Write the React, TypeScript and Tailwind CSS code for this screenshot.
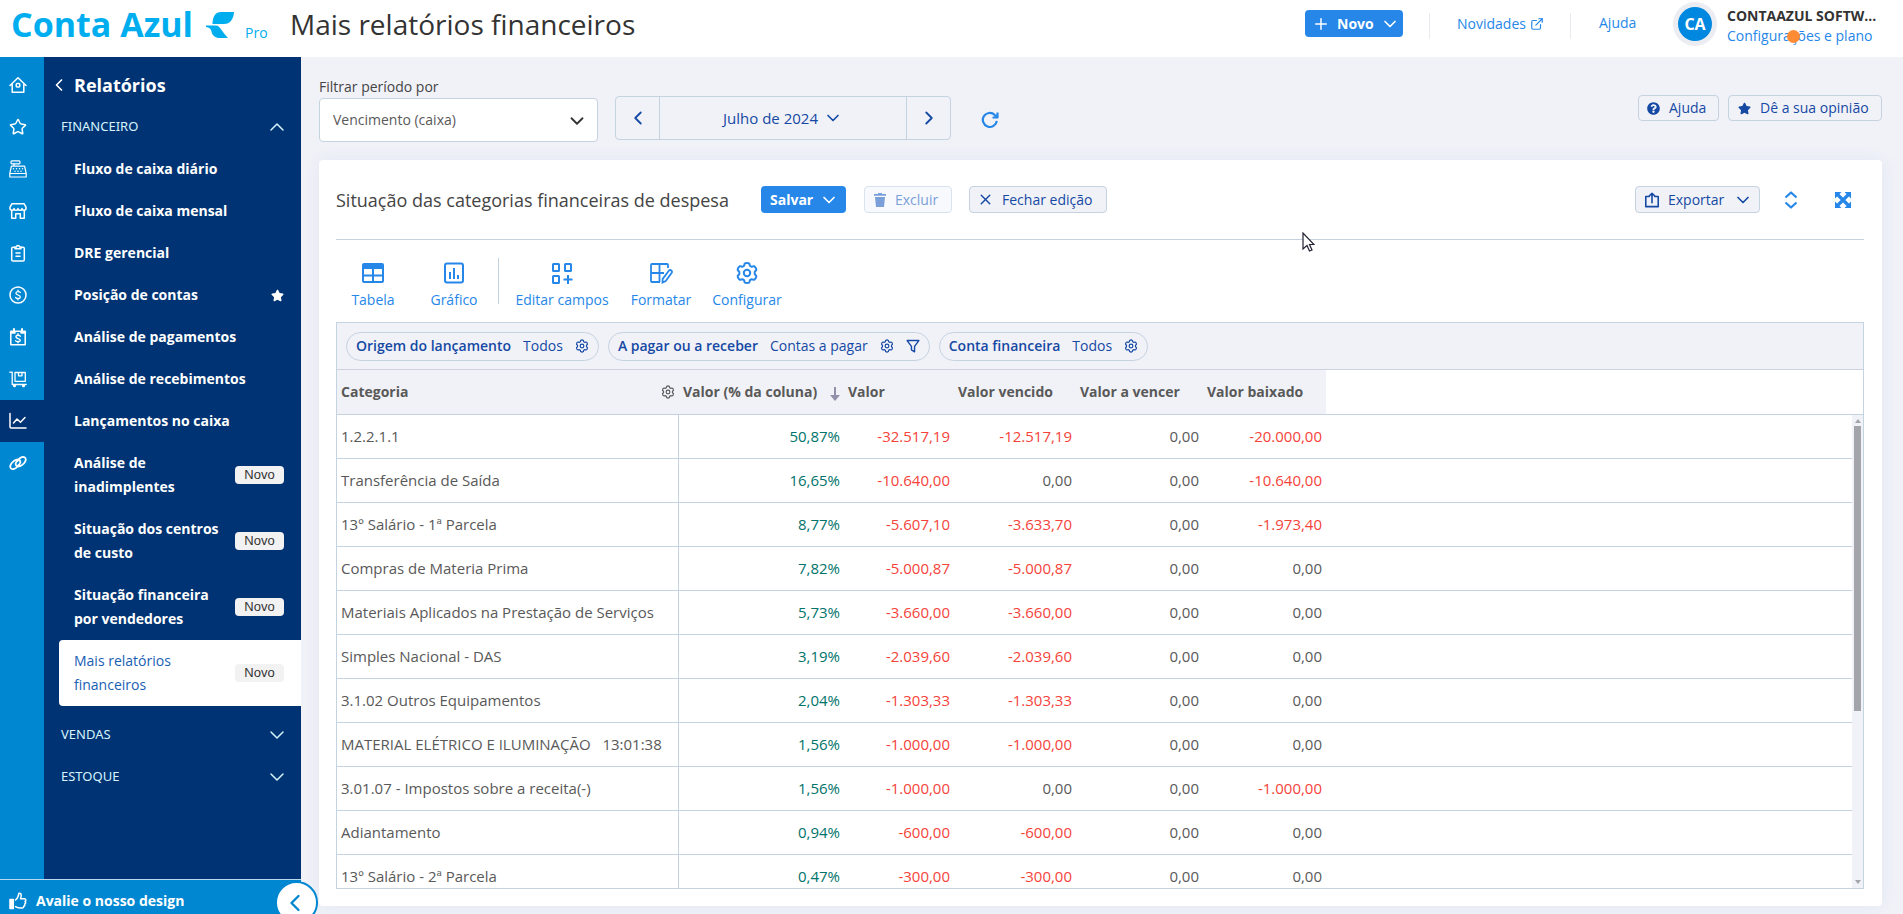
import type { ReactNode } from "react";
import {
  LuChevronDown,
  LuChevronLeft,
  LuChevronRight,
  LuChevronUp,
  LuExternalLink,
  LuPlus,
  LuStar,
  LuX,
} from "react-icons/lu";
import { FaQuestionCircle, FaStar } from "react-icons/fa";

interface IconProps {
  className?: string;
  children: ReactNode;
}

function Icon({ className = "size-[18px]", children }: IconProps) {
  return (
    <svg
      viewBox="0 0 18 18"
      fill="none"
      stroke="currentColor"
      strokeWidth="1.5"
      strokeLinecap="round"
      strokeLinejoin="round"
      className={`shrink-0 ${className}`}
    >
      {children}
    </svg>
  );
}

function GearIcon({ className }: { className: string }) {
  return (
    <svg
      viewBox="0 0 24 24"
      fill="none"
      stroke="currentColor"
      strokeWidth="2"
      strokeLinejoin="round"
      className={`shrink-0 ${className}`}
    >
      <path d="M9.7 2.5c.9-.7 3.7-.7 4.6 0l.6 2.3c.7.5 1.1.7 1.8.9l2.3-.6c1.1.5 2.4 2.7 2.3 3.9l-1.6 1.8v2.4l1.6 1.8c.1 1.2-1.2 3.4-2.3 3.9l-2.3-.6c-.7.2-1.1.5-1.8.9l-.6 2.3c-.9.7-3.7.7-4.6 0l-.6-2.3c-.7-.4-1.1-.7-1.8-.9l-2.3.6c-1.1-.5-2.4-2.7-2.3-3.9l1.6-1.8v-2.4L2.7 9c-.1-1.2 1.2-3.4 2.3-3.9l2.3.6c.7-.2 1.1-.4 1.8-.9z" />
      <circle cx="12" cy="12" r="3.2" />
    </svg>
  );
}

const railItems = [
  {
    label: "Início",
    icon: (
      <Icon>
        <path d="M1 9.5 9 1.7l8 7.8M3.2 8v8.3h11.6V8" />
        <rect x="7.2" y="7.5" width="3.6" height="3.6" rx="1" />
      </Icon>
    ),
  },
  { label: "Favoritos", icon: <LuStar className="size-[18px]" /> },
  {
    label: "Caixa",
    icon: (
      <Icon>
        <rect x="2" y="0.8" width="9" height="3" rx="1" strokeWidth="1.2" />
        <path d="M5 3.8v2.4M2.4 6.2h13.2l1.6 7.3V17H.8v-3.5zM.8 13.5h16.4" strokeWidth="1.2" />
        <path d="M4.5 8.7h0M7.5 8.7h0M10.5 8.7h0M13.5 8.7h0M6 11.2h0M9 11.2h0M12 11.2h0" />
      </Icon>
    ),
  },
  {
    label: "Vendas",
    icon: (
      <Icon>
        <path d="M3 1.7h12l2 3.5v1.3c0 1-.9 1.7-2 1.7s-2-.7-2-1.7c0 1-.9 1.7-2 1.7s-2-.7-2-1.7c0 1-.9 1.7-2 1.7s-2-.7-2-1.7c0 1-.9 1.7-2 1.7S1 7.5 1 6.5V5.2z" />
        <path d="M2.7 8.5v7.7h4v-4.5h4.6v4.5h4V8.5" />
      </Icon>
    ),
  },
  {
    label: "Cadastros",
    icon: (
      <Icon>
        <path d="M5.5 3.2H4a1.3 1.3 0 0 0-1.3 1.3v11.2A1.3 1.3 0 0 0 4 17h10a1.3 1.3 0 0 0 1.3-1.3V4.5A1.3 1.3 0 0 0 14 3.2h-1.5" />
        <path d="M6 4.8h6V3h-1.5a1.5 1.5 0 0 0-3 0H6zM7 9h4M7 12.3h4" />
      </Icon>
    ),
  },
  {
    label: "Financeiro",
    icon: (
      <Icon>
        <circle cx="9" cy="9" r="8" />
        <path
          d="M11.3 6.5c-.6-1.2-4.4-1.5-4.4.7 0 2.1 4.4 1.5 4.4 3.7 0 2.1-4 2-4.6.5M9 4.2v1.5M9 12.4v1.5"
          strokeWidth="1.3"
        />
      </Icon>
    ),
  },
  {
    label: "Contas",
    icon: (
      <Icon>
        <path d="M1.8 3.2h14.4v13.6H1.8z" />
        <path d="M1.8 4.8h4M12.2 4.8h4M5 1v3M13 1v3" strokeWidth="2" />
        <path
          d="M11.3 8.2c-.6-1.2-4.4-1.5-4.4.6s4.4 1.4 4.4 3.4-4 1.9-4.6.5M9 5.8v1.5M9 13.5v1.2"
          strokeWidth="1.4"
        />
      </Icon>
    ),
  },
  {
    label: "Estoque",
    icon: (
      <Icon>
        <path d="M.8 2.2h2.4v12.3h14M6 2.5h10.3v8.8H6zM9.5 2.5v3.3H13V2.5" strokeWidth="1.3" />
        <circle cx="5.5" cy="15.8" r="0.8" />
        <circle cx="14.5" cy="15.8" r="0.8" />
      </Icon>
    ),
  },
  {
    label: "Relatórios",
    icon: (
      <Icon>
        <path d="M1 1.5v13.3A1.2 1.2 0 0 0 2.2 16H17M4.5 11 8 7l3.5 3.2L16 5.5" />
      </Icon>
    ),
  },
  {
    label: "Integrações",
    icon: (
      <Icon>
        <path
          d="M8.2 12.8c-1.5 2-4.5 3.2-6.2 1.5-2-2 .3-5.3 2.8-7.2 2.4-1.7 4.7-2 5.9-.8 1.5 1.5.2 4.2-1.5 5M9.8 5.2C11.3 3.2 14.3 2 16 3.7c2 2-.3 5.3-2.8 7.2-2.4 1.7-4.7 2-5.9.8-1.5-1.5-.2-4.2 1.5-5"
          strokeWidth="1.8"
        />
      </Icon>
    ),
  },
];

interface MenuItem {
  label: string;
  starred?: boolean;
  isNew?: boolean;
  active?: boolean;
}

const menuItems: MenuItem[] = [
  { label: "Fluxo de caixa diário" },
  { label: "Fluxo de caixa mensal" },
  { label: "DRE gerencial" },
  { label: "Posição de contas", starred: true },
  { label: "Análise de pagamentos" },
  { label: "Análise de recebimentos" },
  { label: "Lançamentos no caixa" },
  { label: "Análise de inadimplentes", isNew: true },
  { label: "Situação dos centros de custo", isNew: true },
  { label: "Situação financeira por vendedores", isNew: true },
  { label: "Mais relatórios financeiros", isNew: true, active: true },
];

const columns = ["Valor", "Valor vencido", "Valor a vencer", "Valor baixado"];

const rows = [
  ["1.2.2.1.1", "50,87%", "-32.517,19", "-12.517,19", "0,00", "-20.000,00"],
  ["Transferência de Saída", "16,65%", "-10.640,00", "0,00", "0,00", "-10.640,00"],
  ["13º Salário - 1ª Parcela", "8,77%", "-5.607,10", "-3.633,70", "0,00", "-1.973,40"],
  ["Compras de Materia Prima", "7,82%", "-5.000,87", "-5.000,87", "0,00", "0,00"],
  ["Materiais Aplicados na Prestação de Serviços", "5,73%", "-3.660,00", "-3.660,00", "0,00", "0,00"],
  ["Simples Nacional - DAS", "3,19%", "-2.039,60", "-2.039,60", "0,00", "0,00"],
  ["3.1.02 Outros Equipamentos", "2,04%", "-1.303,33", "-1.303,33", "0,00", "0,00"],
  ["MATERIAL ELÉTRICO E ILUMINAÇÃO   13:01:38", "1,56%", "-1.000,00", "-1.000,00", "0,00", "0,00"],
  ["3.01.07 - Impostos sobre a receita(-)", "1,56%", "-1.000,00", "0,00", "0,00", "-1.000,00"],
  ["Adiantamento", "0,94%", "-600,00", "-600,00", "0,00", "0,00"],
  ["13º Salário - 2ª Parcela", "0,47%", "-300,00", "-300,00", "0,00", "0,00"],
];

const filters = [
  { label: "Origem do lançamento", value: "Todos" },
  { label: "A pagar ou a receber", value: "Contas a pagar", filtered: true },
  { label: "Conta financeira", value: "Todos" },
];

const viewTools = [
  {
    label: "Tabela",
    width: "w-[74px]",
    icon: (
      <svg viewBox="0 0 24 24" fill="none" stroke="currentColor" strokeWidth="2" className="size-6">
        <rect x="2" y="3" width="20" height="18" rx="1" />
        <path d="M2 5.5h20" strokeWidth="5" />
        <path d="M12 8v13M2 14.5h20" />
      </svg>
    ),
  },
  {
    label: "Gráfico",
    width: "w-[88px]",
    icon: (
      <svg viewBox="0 0 24 24" fill="none" stroke="currentColor" strokeWidth="2" className="size-6">
        <rect x="3" y="2.5" width="18" height="19" rx="2" />
        <path d="M8 11v7M12 7v11M16 14v4" />
      </svg>
    ),
  },
];

const editTools = [
  {
    label: "Editar campos",
    width: "w-[98px]",
    icon: (
      <svg viewBox="0 0 24 24" fill="none" stroke="currentColor" strokeWidth="2" className="size-6">
        <rect x="3" y="3" width="6" height="7" rx="0.5" />
        <rect x="15" y="3" width="6" height="7" rx="0.5" />
        <rect x="3" y="15" width="6" height="7" rx="0.5" />
        <path d="M18 14v9M13.5 18.5h9" />
      </svg>
    ),
  },
  {
    label: "Formatar",
    width: "w-[64px]",
    icon: (
      <svg viewBox="0 0 24 24" fill="none" stroke="currentColor" strokeWidth="1.8" className="size-6">
        <path d="M19 7V4a1 1 0 0 0-1-1H3a1 1 0 0 0-1 1v16a1 1 0 0 0 1 1h8M10.5 3v18M2 12h13" />
        <path d="M20 9.5a1.8 1.8 0 0 1 2.7 2.3l-6 8.2-3.2 1.5.2-3.6z" />
      </svg>
    ),
  },
  { label: "Configurar", width: "w-[72px]", icon: <GearIcon className="size-6" /> },
];

function Header() {
  return (
    <header className="flex h-[57px] shrink-0 bg-white pl-[11px] pr-[22px]">
      <a href="#" aria-label="Conta Azul Pro" className="flex w-[279px] shrink-0 text-[#00aeef]">
        <span className="w-[190px] shrink-0 whitespace-nowrap text-[34px] font-bold leading-[49px]">
          Conta Azul
        </span>
        <svg viewBox="0 0 28 26" fill="currentColor" className="ml-[5px] mt-3 h-[26px] w-7 shrink-0">
          <path d="M28 0H15C9.5 0 6.500 4.500 6.500 12H18c6 0 9.500-4.500 10-12z" />
          <path d="M0 13.5v1.500c3 .5 4.800 1.500 5.500 4.500C6.300 23.500 9 26 14 26h8c-2.500-3-4.500-5-6.500-8-2-3-3-4.500-6-4.500z" />
        </svg>
        <span className="ml-[11px] mt-[23px] text-sm leading-5">Pro</span>
      </a>
      <h1 className="grow whitespace-nowrap text-[28px] leading-[49px] text-[#333]">
        Mais relatórios financeiros
      </h1>
      <div className="flex shrink-0 items-start">
        <button className="mt-[10px] flex h-[27px] w-[98px] items-center rounded bg-[#2687e9] pl-[7px] text-sm font-bold text-white">
          <LuPlus className="size-[18px]" />
          <span className="ml-[7px] w-[39px] text-left">Novo</span>
          <LuChevronDown className="ml-1 size-5" />
        </button>
        <span className="ml-[26px] mt-[13px] h-[26px] w-px bg-[#e8eaf0]" />
        <a href="#" className="ml-[27px] mt-[14px] flex w-[87px] items-center justify-between text-sm leading-5 text-[#2687e9]">
          Novidades
          <LuExternalLink className="size-[14px]" />
        </a>
        <span className="ml-[26px] mt-[13px] h-[26px] w-px bg-[#e8eaf0]" />
        <a href="#" className="ml-7 mt-[13px] w-[40px] text-sm font-medium leading-5 text-[#2687e9]">
          Ajuda
        </a>
        <span className="ml-[34px] mt-[2px] flex size-[44px] items-center justify-center rounded-full bg-[#ebedf2]">
          <span className="flex size-[34px] items-center justify-center rounded-full bg-[#0087e0] text-base font-bold text-white">
            CA
          </span>
        </span>
        <div className="ml-[10px] mt-[6px] w-[154px] whitespace-nowrap text-sm leading-5">
          <p className="font-bold text-[#333]">CONTAAZUL SOFTW...</p>
          <a href="#" className="relative block text-[#2687e9]">
            Configurações e plano
            <span className="absolute left-[60px] top-1 size-[13px] rounded-full bg-[#ff8c35]" />
          </a>
        </div>
      </div>
    </header>
  );
}

function Sidebar() {
  return (
    <aside className="flex w-[301px] shrink-0 flex-col">
      <div className="flex min-h-0 grow overflow-hidden">
        <nav aria-label="Módulos" className="flex w-[44px] flex-col bg-[#0087d1] pt-[7px]">
          {railItems.map((item) => (
            <a
              key={item.label}
              href="#"
              aria-label={item.label}
              className={`flex h-[42px] shrink-0 items-center pl-[9px] text-white ${
                item.label === "Relatórios" ? "bg-[#003373]" : ""
              }`}
            >
              {item.icon}
            </a>
          ))}
        </nav>
        <nav aria-label="Relatórios" className="grow bg-[#003373] text-white">
          <button className="flex h-[49px] w-full items-center pl-[5px] pt-[7px] text-lg font-bold">
            <LuChevronLeft className="size-5" />
            <span className="ml-[5px]">Relatórios</span>
          </button>
          <MenuGroup label="FINANCEIRO" open />
          <ul>
            {menuItems.map((item) => (
              <li key={item.label} className="pl-[15px]">
                <a
                  href="#"
                  className={`flex items-center justify-between rounded-l py-[9px] pl-[15px] pr-[17px] text-sm leading-6 ${
                    item.active ? "bg-white font-medium text-[#1860b4]" : "font-bold"
                  }`}
                >
                  <span className={item.isNew ? "w-[150px]" : "whitespace-nowrap"}>{item.label}</span>
                  {item.starred && <FaStar className="size-[13px]" />}
                  {item.isNew && (
                    <span className="w-[49px] rounded bg-[#f2f2f2] text-center font-['Liberation_Sans'] text-[13px] font-normal leading-[18px] text-[#333]">
                      Novo
                    </span>
                  )}
                </a>
              </li>
            ))}
          </ul>
          <div className="mt-2">
            <MenuGroup label="VENDAS" />
            <MenuGroup label="ESTOQUE" />
          </div>
        </nav>
      </div>
      <div className="relative flex h-[35px] shrink-0 items-center border-t border-[#b9d9ee] bg-[#0087d1]">
        <a href="#" className="mt-2 flex items-center pl-[9px] text-sm font-bold text-white">
          <Icon>
            <path d="M6.5 8c2-1.5 3-3.5 3.3-6.5 2.4-.8 3.2 1.8 1.7 5.2h3.8c1.8 0 2 2.3.7 2.8 1 .6.8 2.1-.3 2.5.5 1 .1 2-1 2.2.1 1.2-.5 1.9-1.7 1.9-3 .1-4.5-.2-6.5-1.5" />
            <path d="M1 7.5h3.3v9H1z" fill="currentColor" />
          </Icon>
          <span className="ml-[9px]">Avalie o nosso design</span>
        </a>
        <button
          aria-label="Recolher menu"
          className="absolute left-[275px] top-px z-10 flex size-[43px] items-center justify-center rounded-full border-2 border-[#0087d1] bg-white pr-1 text-[#0087d1]"
        >
          <LuChevronLeft className="size-7" />
        </button>
      </div>
    </aside>
  );
}

function MenuGroup({ label, open = false }: { label: string; open?: boolean }) {
  return (
    <button className="flex h-[42px] w-full items-center justify-between pl-[17px] pr-3 text-[13px] text-[#d6f3ff]">
      <span className="font-['Noto_Sans']">{label}</span>
      {open ? (
        <LuChevronUp strokeWidth="1.5" className="size-6" />
      ) : (
        <LuChevronDown strokeWidth="1.5" className="size-6" />
      )}
    </button>
  );
}

function PeriodBar() {
  return (
    <div className="flex h-[103px] shrink-0 items-start">
      <div className="w-[279px] pt-[19px]">
        <label htmlFor="periodo" className="block text-sm leading-[22px] text-[#444]">
          Filtrar período por
        </label>
        <div className="relative">
          <select
            id="periodo"
            className="h-[44px] w-full appearance-none rounded border border-[#c5d2e0] bg-white px-[13px] text-sm text-[#595959]"
          >
            <option>Vencimento (caixa)</option>
            <option>Competência</option>
          </select>
          <LuChevronDown className="pointer-events-none absolute right-[10px] top-3 size-[22px] text-[#333]" />
        </div>
      </div>
      <div className="ml-[17px] mt-[39px] flex h-[44px] w-[336px] rounded border border-[#c5d2e0] text-[#1549a3]">
        <button aria-label="Mês anterior" className="flex w-[44px] items-center justify-center border-r border-[#c5d2e0]">
          <LuChevronLeft className="size-[22px]" />
        </button>
        <button className="flex grow items-center justify-center gap-[5px] text-[15px] font-medium">
          Julho de 2024
          <LuChevronDown className="size-5" />
        </button>
        <button aria-label="Próximo mês" className="flex w-[44px] items-center justify-center border-l border-[#c5d2e0]">
          <LuChevronRight className="size-[22px]" />
        </button>
      </div>
      <button aria-label="Atualizar" className="ml-[30px] mt-[54px] text-[#2687e9]">
        <Icon>
          <path
            d="M15.8 9.8A7 7 0 1 1 13.8 4l2 1.8M16.5 1.5v5h-5"
            strokeWidth="2.2"
            strokeLinecap="butt"
          />
        </Icon>
      </button>
      <div className="ml-auto mt-[38px] flex gap-[9px] text-sm font-medium text-[#1549a3]">
        <button className="flex h-[26px] w-[81px] items-center rounded border border-[#c5d2e0] pl-2">
          <FaQuestionCircle className="size-[13px]" />
          <span className="ml-[9px]">Ajuda</span>
        </button>
        <button className="flex h-[26px] w-[154px] items-center whitespace-nowrap rounded border border-[#c5d2e0] pl-[9px]">
          <FaStar className="size-[13px]" />
          <span className="ml-[9px]">Dê a sua opinião</span>
        </button>
      </div>
    </div>
  );
}

function ReportHeader() {
  return (
    <div className="flex h-[80px] shrink-0 items-center border-b border-[#c5d2e0] text-sm">
      <h2 className="w-[406px] whitespace-nowrap text-lg text-[#444]">
        Situação das categorias financeiras de despesa
      </h2>
      <button className="ml-[19px] flex h-[27px] w-[85px] items-center rounded bg-[#2687e9] pl-[9px] font-bold text-white">
        <span className="w-[46px] text-left">Salvar</span>
        <LuChevronDown className="ml-[3px] size-5" />
      </button>
      <button
        disabled
        className="ml-[18px] flex h-[27px] w-[88px] items-center rounded border border-[#d9e3ee] bg-[#f7f9fd] pl-[9px] font-medium text-[#7b9fd9]"
      >
        <svg viewBox="0 0 12 14" fill="currentColor" className="h-[14px] w-3">
          <path d="M4 0h4v1h4v1.8H0V1h4zM1 4h10l-1 10H2z" />
        </svg>
        <span className="ml-[9px]">Excluir</span>
      </button>
      <button className="ml-[17px] flex h-[27px] w-[138px] items-center whitespace-nowrap rounded border border-[#c5d2e0] bg-[#f1f2f8] pl-[7px] font-medium text-[#1549a3]">
        <LuX className="size-[17px]" />
        <span className="ml-2">Fechar edição</span>
      </button>
      <button className="ml-auto flex h-[27px] w-[125px] items-center rounded border border-[#c5d2e0] bg-[#f1f2f8] pl-2 font-medium text-[#1549a3]">
        <Icon className="size-4">
          <path d="M6 5H2v11.500h14V5h-4M9 12V1.500M5.800 4.500 9 1.500l3.200 3" strokeWidth="1.8" />
        </Icon>
        <span className="ml-2 w-[61px] text-left">Exportar</span>
        <LuChevronDown className="ml-1 size-5" />
      </button>
      <button aria-label="Recolher ou expandir" className="ml-[22px] text-[#2687e9]">
        <Icon>
          <path d="M3.5 6.5 9 1.5l5.500 5M3.500 11.500l5.500 5 5.500-5" strokeWidth="2.2" strokeLinecap="butt" />
        </Icon>
      </button>
      <button aria-label="Tela cheia" className="ml-[35px] mr-[13px] text-[#2687e9]">
        <svg viewBox="0 0 16 16" fill="currentColor" className="size-4">
          <path d="M0 0h6.5L0 6.500zM16 0v6.500L9.500 0zM16 16H9.500L16 9.500zM0 16V9.500L6.500 16z" />
          <path d="M2 2l12 12M14 2 2 14" stroke="currentColor" strokeWidth="3.2" />
        </svg>
      </button>
    </div>
  );
}

function Toolbar() {
  return (
    <div className="flex h-[82px] shrink-0 text-sm text-[#2687e9]">
      {viewTools.map((tool) => (
        <ToolButton key={tool.label} {...tool} />
      ))}
      <span className="mt-[18px] h-[46px] w-px bg-[#c5d2e0]" />
      <div className="ml-[14px] flex gap-[18px]">
        {editTools.map((tool) => (
          <ToolButton key={tool.label} {...tool} />
        ))}
      </div>
    </div>
  );
}

function ToolButton({ label, width, icon }: { label: string; width: string; icon: ReactNode }) {
  return (
    <button className={`flex flex-col items-center whitespace-nowrap pt-[21px] leading-5 ${width}`}>
      {icon}
      <span className="mt-[5px]">{label}</span>
    </button>
  );
}

function FilterRow() {
  return (
    <div className="flex h-[47px] shrink-0 items-center gap-[9px] border-b border-[#cdd2dc] bg-[#f1f2f8] pl-[9px] text-sm text-[#1549a3]">
      {filters.map((filter) => (
        <button
          key={filter.label}
          className="flex h-[29px] items-center gap-3 whitespace-nowrap rounded-full border border-[#c5d2e0] px-[9px]"
        >
          <span className="font-semibold">{filter.label}</span>
          <span>{filter.value}</span>
          <GearIcon className="size-[14px]" />
          {filter.filtered && (
            <Icon className="size-[14px]">
              <path d="M1.5 2h15L11 9.500v7L7 14V9.500z" strokeWidth="1.8" />
            </Icon>
          )}
        </button>
      ))}
    </div>
  );
}

function ReportTable() {
  return (
    <div className="relative min-h-0 grow overflow-hidden">
      <table className="w-full table-fixed border-separate border-spacing-0">
        <colgroup>
          <col className="w-[342px]" />
          <col className="w-[165px]" />
          <col className="w-[110px]" />
          <col className="w-[122px]" />
          <col className="w-[127px]" />
          <col className="w-[123px]" />
          <col />
        </colgroup>
        <thead>
          <tr className="h-[45px] text-left text-sm font-bold text-[#595959] [&>*]:border-b [&>*]:border-[#c5d2e0]">
            <th className="bg-[#f1f2f8] px-1">
              <div className="flex items-center justify-between">
                Categoria
                <GearIcon className="size-[14px]" />
              </div>
            </th>
            <th className="bg-[#f1f2f8] px-1">
              <div className="flex items-center justify-between whitespace-nowrap">
                Valor (% da coluna)
                <svg viewBox="0 0 10 14" fill="currentColor" className="mt-1 h-[14px] w-[10px] text-[#9490ab]">
                  <path d="M4 0h2v8h4l-5 6-5-6h4z" />
                </svg>
              </div>
            </th>
            {columns.map((column) => (
              <th key={column} className="whitespace-nowrap bg-[#f1f2f8] px-1">
                {column}
              </th>
            ))}
            <td />
          </tr>
        </thead>
        <tbody>
          {rows.map(([category, ...values]) => (
            <tr key={category} className="h-[44px] text-[15px] text-[#595959] [&>td]:border-b [&>td]:border-[#c5d2e0]">
              <td className="whitespace-pre border-r px-1">{category}</td>
              {values.map((value, i) => (
                <td
                  key={i}
                  className={`px-1 text-right ${
                    i === 0 ? "text-[#00736b]" : value.startsWith("-") ? "text-[#f5433a]" : ""
                  }`}
                >
                  {value}
                </td>
              ))}
              <td />
            </tr>
          ))}
        </tbody>
      </table>
      <div className="absolute bottom-0 right-0 top-[45px] flex w-[11px] flex-col items-center bg-[#f1f2f8] py-1 text-[#a3a5aa]">
        <svg viewBox="0 0 6 4" fill="currentColor" className="h-1 w-[6px]">
          <path d="M3 0 6 4H0z" />
        </svg>
        <div className="mt-[3px] h-[285px] w-[7px] bg-[#a3a5aa]" />
        <svg viewBox="0 0 6 4" fill="currentColor" className="mt-auto h-1 w-[6px]">
          <path d="M3 4 0 0h6z" />
        </svg>
      </div>
    </div>
  );
}

export default function App() {
  return (
    <div className="flex h-screen flex-col overflow-hidden bg-[#f1f2f8] font-['Open_Sans',sans-serif]">
      <Header />
      <div className="flex min-h-0 grow">
        <Sidebar />
        <main className="flex min-w-0 grow flex-col pb-2 pl-[18px] pr-[21px]">
          <PeriodBar />
          <section className="flex min-h-0 grow flex-col rounded bg-white pb-[17px] pl-[17px] pr-[18px] shadow-[0_0_16px_rgba(200,215,235,0.4)]">
            <ReportHeader />
            <Toolbar />
            <div className="flex min-h-0 grow flex-col border border-[#c5d2e0]">
              <FilterRow />
              <ReportTable />
            </div>
          </section>
        </main>
        <div className="mt-[11px] h-[780px] w-px bg-[#a3a5aa]" />
      </div>
      <svg viewBox="0 0 13 20" className="pointer-events-none absolute left-[1302px] top-[232px] h-5 w-[13px]">
        <path d="M1 1v16l4-3.5L7.500 19l2.500-1-2.500-5.500H12z" fill="#fff" stroke="#223" strokeWidth="1.2" />
      </svg>
    </div>
  );
}
